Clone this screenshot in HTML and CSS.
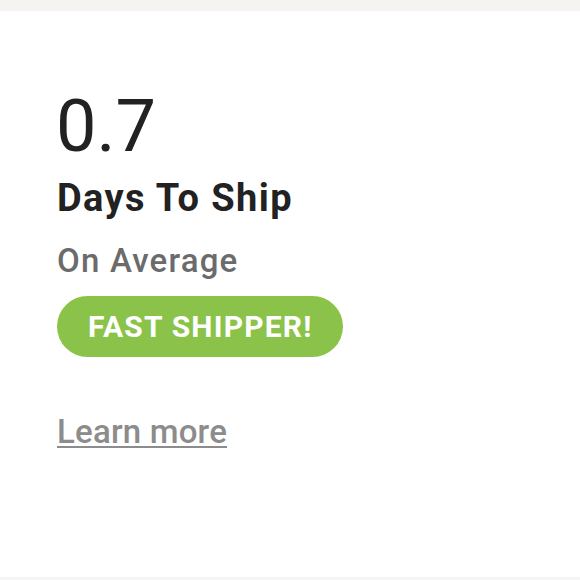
FILE: index.html
```html
<!DOCTYPE html>
<html lang="en">
<head>
<meta charset="utf-8">
<title>Days To Ship</title>
<link rel="stylesheet" href="styles.css">
</head>
<body>
<div class="topbar"></div>
<main class="card">
  <div class="stat">0.7</div>
  <div class="label">Days To Ship</div>
  <div class="sub">On Average</div>
  <div class="badge-row"><span class="badge">FAST SHIPPER!</span></div>
  <a class="learn" href="#">Learn more</a>
</main>
<div class="bottombar"></div>
</body>
</html>
```
FILE: styles.css
```css
html, body {
  margin: 0;
  padding: 0;
  background: #ffffff;
  font-family: Roboto, "Liberation Sans", Arial, sans-serif;
}
body {
  height: 580px;
  display: flex;
  flex-direction: column;
  overflow: hidden;
}
.topbar {
  height: 11px;
  background: #f5f4f1;
  flex: none;
}
.card {
  flex: 1;
  background: #ffffff;
  padding: 80px 0 0 57px;
  display: flex;
  flex-direction: column;
  align-items: flex-start;
}
.stat {
  font-size: 72px;
  line-height: 72px;
  color: #222222;
  font-weight: 400;
  margin-left: -1px;
}
.label {
  margin-top: 16px;
  font-size: 38px;
  line-height: 38px;
  font-weight: 700;
  color: #222222;
  letter-spacing: 1.4px;
}
.sub {
  margin-top: 27px;
  font-size: 33px;
  line-height: 33px;
  font-weight: 500;
  color: #6b6b6b;
  letter-spacing: 1.2px;
}
.badge-row {
  margin-top: 19px;
}
.badge {
  display: inline-flex;
  align-items: center;
  height: 61px;
  padding: 0 30px 0 31px;
  border-radius: 31px;
  background: #8bc34a;
  color: #ffffff;
  font-size: 30px;
  font-weight: 700;
  letter-spacing: 1.2px;
  box-sizing: border-box;
}
.learn {
  margin-top: 58px;
  font-size: 33px;
  line-height: 33px;
  font-weight: 500;
  color: #8c8c8c;
  letter-spacing: 0.2px;
  text-decoration: underline;
  text-decoration-thickness: 2px;
  text-underline-offset: 3px;
}
.bottombar {
  height: 3px;
  background: #f5f5f5;
  flex: none;
}
```
